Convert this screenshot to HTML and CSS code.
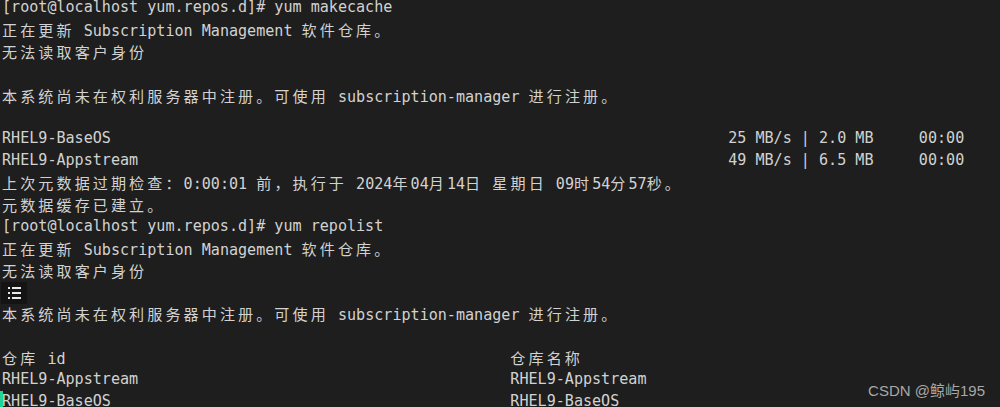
FILE: index.html
```html
<!DOCTYPE html>
<html lang="zh-CN">
<head>
  <meta charset="UTF-8">
  <title>yum repolist</title>
  <link rel="stylesheet" href="styles.css">
</head>
<body>

<div class="term">
  <div class="line">[root@localhost yum.repos.d]# yum makecache</div>
  <div class="line"><span class="w">正在更新</span> Subscription Management <span class="w">软件仓库。</span></div>
  <div class="line"><span class="w">无法读取客户身份</span></div>
  <div class="line"></div>
  <div class="line"><span class="w">本系统尚未在权利服务器中注册。可使用</span> subscription-manager <span class="w">进行注册。</span></div>
  <div class="line"></div>
  <div class="line cols dl"><span>RHEL9-BaseOS</span><span>25 MB/s | 2.0 MB     00:00</span></div>
  <div class="line cols dl"><span>RHEL9-Appstream</span><span>49 MB/s | 6.5 MB     00:00</span></div>
  <div class="line"><span class="w">上次元数据过期检查：</span>0:00:01 <span class="w">前，执行于</span> 2024<span class="w">年</span>04<span class="w">月</span>14<span class="w">日</span> <span class="w">星期日</span> 09<span class="w">时</span>54<span class="w">分</span>57<span class="w">秒。</span></div>
  <div class="line"><span class="w">元数据缓存已建立。</span></div>
  <div class="line">[root@localhost yum.repos.d]# yum repolist</div>
  <div class="line"><span class="w">正在更新</span> Subscription Management <span class="w">软件仓库。</span></div>
  <div class="line"><span class="w">无法读取客户身份</span></div>
  <div class="line icon-line">
    <span class="list-btn">
      <svg width="26" height="22" viewBox="0 0 26 22">
        <g fill="#e8e8e8">
          <rect x="7" y="5" width="2" height="2"/>
          <rect x="11" y="5" width="9" height="2"/>
          <rect x="7" y="10" width="2" height="2"/>
          <rect x="11" y="10" width="9" height="2"/>
          <rect x="7" y="15" width="2" height="2"/>
          <rect x="11" y="15" width="9" height="2"/>
        </g>
      </svg>
    </span>
  </div>
  <div class="line"><span class="w">本系统尚未在权利服务器中注册。可使用</span> subscription-manager <span class="w">进行注册。</span></div>
  <div class="line"></div>
  <div class="line cols repo"><span><span class="w">仓库</span> id</span><span class="w">仓库名称</span></div>
  <div class="line cols repo"><span>RHEL9-Appstream</span><span>RHEL9-Appstream</span></div>
  <div class="line cols repo"><span>RHEL9-BaseOS</span><span>RHEL9-BaseOS</span></div>
</div>

<div class="cursor"></div>
<div class="mark">CSDN @鲸屿195</div>

</body>
</html>
```

FILE: styles.css
```css
html, body {
  margin: 0;
  padding: 0;
  height: 100%;
  overflow: hidden;
}

body {
  background-color: #1e1e1e;
  color: #d2d2d2;
  font-family: "DejaVu Sans Mono", "Noto Sans CJK SC", monospace;
  font-size: 15.09px;
  position: relative;
}

.term {
  margin-top: -3px;
  padding-left: 2px;
}

.line {
  height: 21.9px;
  line-height: 21.9px;
  white-space: pre;
}

.icon-line {
  white-space: normal;
  margin-left: -1px;
}

/* CJK glyphs take two cells */
.w {
  font-family: "Noto Sans CJK SC", sans-serif;
  letter-spacing: 3.08px;
}

.cols { display: grid; }
.dl { grid-template-columns: 80ch 1fr; }
.repo { grid-template-columns: 56ch 1fr; }

.list-btn {
  display: inline-block;
  vertical-align: top;
  width: 26px;
  height: 22px;
  background-color: #141414;
}

.list-btn svg { display: block; }

.cursor {
  position: absolute;
  left: 0;
  bottom: 0;
  width: 3px;
  height: 16px;
  background-color: #1fd49a;
}

.mark {
  position: absolute;
  right: 15px;
  top: 379px;
  font-family: "Liberation Sans", "Noto Sans CJK SC", sans-serif;
  font-size: 15px;
  color: #a8a8a8;
}
```
